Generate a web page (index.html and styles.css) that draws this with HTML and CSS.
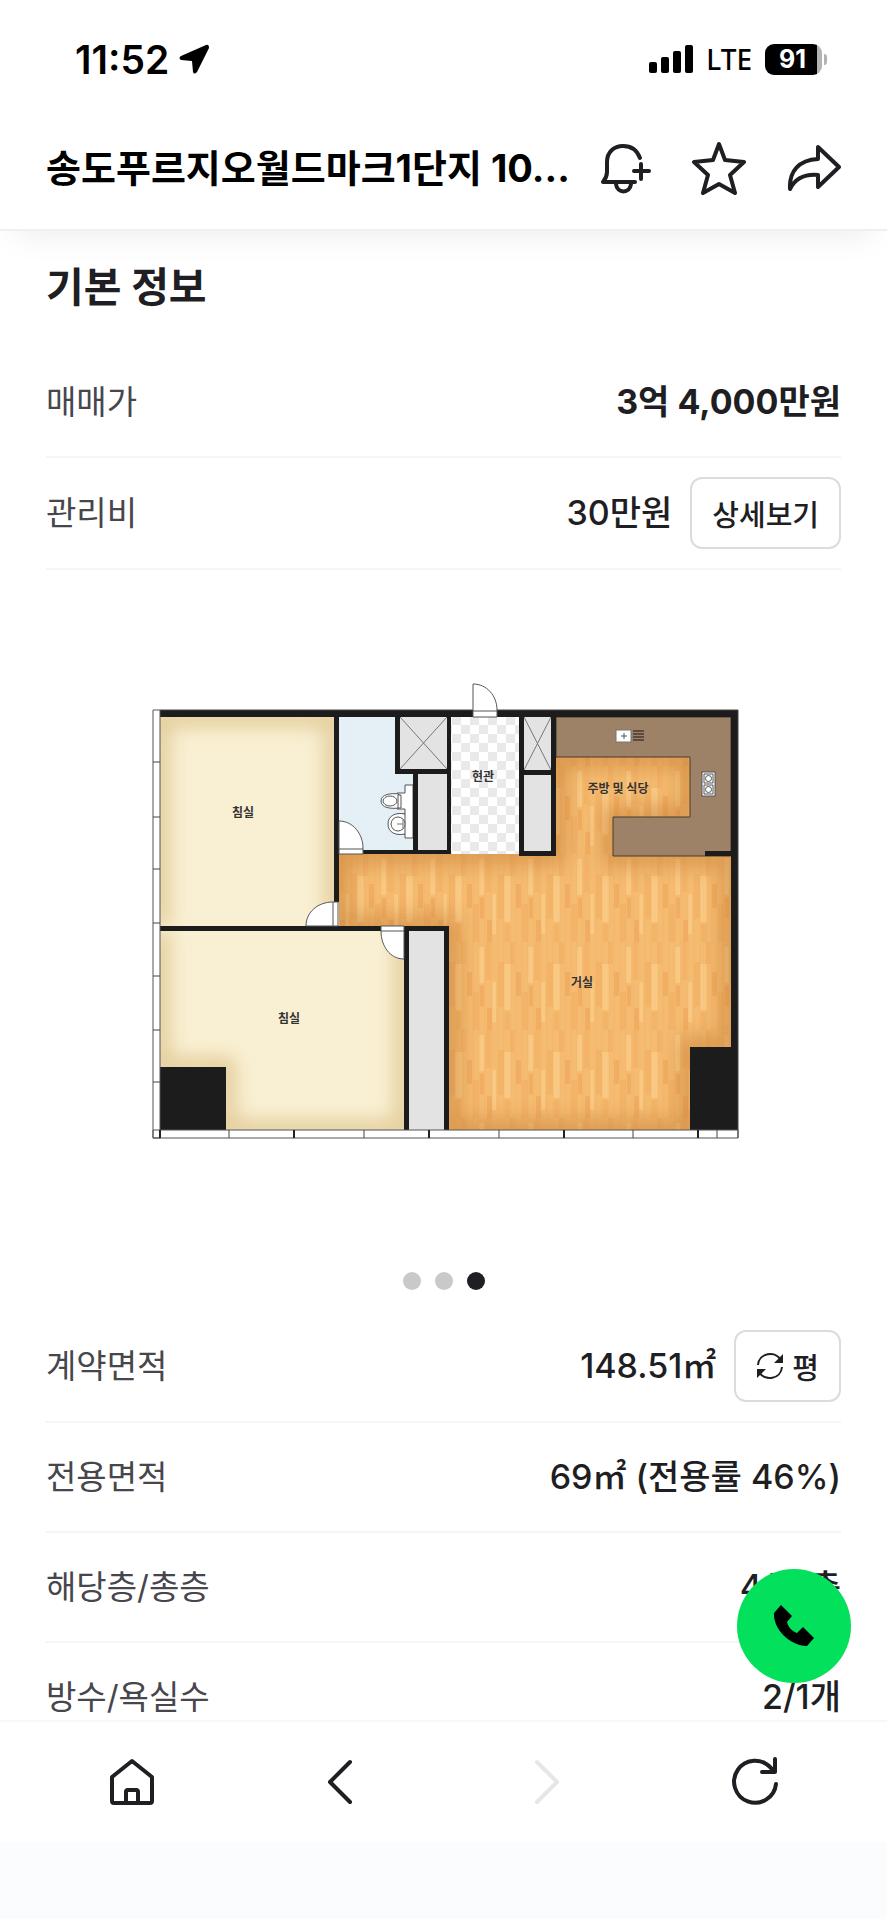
FILE: index.html
```html
<!DOCTYPE html>
<html lang="ko">
<head>
  <meta charset="UTF-8" />
  <meta name="viewport" content="width=device-width, initial-scale=1.0"/>
  <title>송도푸르지오월드마크1단지</title>
  <link rel="stylesheet" href="styles.css">
</head>
<body>

  <div class="app">
    <header class="header">
      <!-- Status bar -->
      <div class="status-bar">
        <div class="status-left">
          <span class="time">11:52</span>
          <svg class="location" viewBox="0 0 30 30" aria-hidden="true"><path d="M27 1 2 12q-3 2 0 4l11 1 1 11q1 3 4 0L30 4q0-4-3-3z"/></svg>
        </div>
        <div class="status-right">
          <svg class="signal" viewBox="0 0 44 28" aria-hidden="true">
            <rect x="0" y="17" width="8" height="11" rx="2"/>
            <rect x="12" y="12" width="8" height="16" rx="2"/>
            <rect x="24" y="6" width="8" height="22" rx="2"/>
            <rect x="36" y="0" width="8" height="28" rx="2"/>
          </svg>
          <span class="network">LTE</span>
          <div class="battery"><span class="battery-level">91</span></div>
        </div>
      </div>

      <!-- Toolbar -->
      <div class="toolbar">
        <h1 class="title">송도푸르지오월드마크1단지 10...</h1>
        <div class="actions">
          <button class="icon-btn" aria-label="알림 추가">
            <svg viewBox="0 0 54 54"><path d="M38 41H6q4-5 4-10V21C10 11 17 5 26 5c8 0 14 4 17 12M19 43c1 10 14 10 15 0M44 23v15M37 30h15"/></svg>
          </button>
          <button class="icon-btn" aria-label="관심 매물">
            <svg viewBox="0 0 54 54"><path d="M27 3l6 16 19 2-14 13 5 18-16-9-16 9 5-18L2 21l19-2z"/></svg>
          </button>
          <button class="icon-btn" aria-label="공유">
            <svg viewBox="0 0 54 54"><path d="M31 6l21 20-21 20V34C19 33 9 36 3 48 2 30 12 19 31 18z"/></svg>
          </button>
        </div>
      </div>
    </header>

    <div class="body">
      <main class="content">
        <h2 class="section-title">기본 정보</h2>

        <dl class="info">
          <div class="row">
            <dt>매매가</dt>
            <dd><strong>3억 4,000만원</strong></dd>
          </div>
          <div class="row">
            <dt>관리비</dt>
            <dd>30만원 <button class="btn">상세보기</button></dd>
          </div>
        </dl>

        <!-- Floor plan -->
        <div class="carousel">
          <svg class="plan" viewBox="46 600 795 640" role="img" aria-label="평면도">
            <defs>
              <pattern id="wood" x="339" y="854" width="49" height="88" patternUnits="userSpaceOnUse">
                <rect width="49" height="88" fill="#f5bb70"/>
                <path fill="#f3b468" d="M0 0h5v38H0zM12 20h6v45h-6zM24 0h5v22h-5zM36 50h6v38h-6zM19 70h5v18h-5z"/>
                <path fill="#f9c883" d="M18 22h7v46h-7zM6 40h4v40H6zM42 5h5v36h-5z"/>
                <path fill="#f1ad61" d="M30 30h5v24h-5zM1 66h5v22H1zM43 44h4v20h-4z"/>
                <path stroke="#e9a75c" stroke-opacity=".25" fill="none" d="M6 0v88M12 0v88M18 0v88M25 0v88M30 0v88M36 0v88M42 0v88M48 0v88"/>
              </pattern>
              <pattern id="tile" x="452" y="716" width="18" height="18" patternUnits="userSpaceOnUse">
                <rect width="18" height="18" fill="#fff"/>
                <path fill="#e9e9e9" d="M0 0h9v9H0zM9 9h9v9H9z"/>
              </pattern>
              <filter id="soft" x="-20%" y="-20%" width="140%" height="140%"><feGaussianBlur stdDeviation="10"/></filter>
              <clipPath id="bed1"><path d="M160 717h174v210H160z"/></clipPath>
              <clipPath id="bed2"><path d="M160 931h244v199H160z"/></clipPath>
              <clipPath id="living"><path d="M339 854h217v-97h175v373H449V927H339z"/></clipPath>
            </defs>

            <!-- Rooms -->
            <path fill="#f9f0d3" d="M160 717h174v210H160zM160 931h244v199H160z"/>
            <g clip-path="url(#bed1)"><path class="shade-cream" d="M160 927V717h174v210"/></g>
            <g clip-path="url(#bed2)"><path class="shade-cream" d="M160 931v136h66v63h178V931"/></g>
            <path fill="url(#wood)" d="M339 854h217v-97h175v373H449V927H339z"/>
            <g clip-path="url(#living)"><path class="shade-wood" d="M339 854h217v-97h134v60h-77v39h118v191h-41v83H449V927H339z"/></g>
            <path fill="#e5f0f6" d="M339 717h56v57h18v76h-74z"/>
            <path fill="url(#tile)" d="M451 717h68v137h-68z"/>
            <path fill="#e3e3e3" d="M400 717h47v52h-47zM418 774h29v76h-29zM524 717h27v53h-27zM524 775h27v76h-27zM409 931h35v199h-35z"/>
            <path class="thin" d="M400 717l47 52M447 717l-47 52M524 717l27 53M551 717l-27 53"/>

            <!-- Kitchen counter -->
            <path fill="#9d8268" stroke="#4a3b2c" d="M556 717h175v139H613v-39h77v-60H556z"/>
            <path fill="#fff" stroke="#777" d="M616 730h15v12h-15z"/>
            <path stroke="#555" d="M624 733v6M621 736h6"/>
            <path stroke="#5c4c40" stroke-width="2" d="M633 731h11M633 734h11M633 737h11M633 740h11"/>
            <rect class="fixture" x="702" y="772" width="13" height="24"/>
            <path class="fixture" d="M704 774h9v9h-9zM704 785h9v9h-9z"/>
            <circle class="fixture" cx="708.5" cy="778.5" r="3"/>
            <circle class="fixture" cx="708.5" cy="789.5" r="3"/>

            <!-- Bathroom fixtures -->
            <path class="fixture" d="M413 785h-8v8h-8v16h8v5h-8v20h8v4h8z"/>
            <path class="fixture" d="M399 794c-8-1-18 0-18 7s10 8 18 7z"/>
            <ellipse class="fixture" cx="390" cy="801" rx="7" ry="5"/>
            <path class="fixture" d="M398 795h3v13h-3z"/>
            <path class="fixture" d="M405 814c-10-2-17 2-17 10s7 12 17 10z"/>
            <circle class="fixture" cx="398" cy="824" r="7"/>
            <path class="thin" d="M397 824h6M403 820v8"/>

            <!-- Walls -->
            <path fill="#1c1c1c" d="M160 710h578v420h-48v-83h41V717H160z
              M334 717h5v185h-5z M395 717h5v52h47v-52h4v137h-88v-4h50v-76h-18z M418 774v76h29v-76z
              M519 717h5v53h27v-53h5v139h-37z M524 775v76h27v-76z M705 851h26v5h-26z
              M160 926h221v5H160z M404 926h45v204h-5V931h-35v199h-5z M160 1067h66v63h-66z" fill-rule="evenodd"/>

            <!-- Windows -->
            <path class="window" d="M153 710h7v428h-7zM153 1130h585v8H153z"/>
            <path class="tick" d="M153 762h7M153 817h7M153 869h7M153 923h7M153 976h7M153 1030h7M153 1082h7M229 1130v8M364 1130v8M499 1130v8M633 1130v8M717 1130v8"/>
            <path class="tick tick-bold" d="M160 1130v8M294 1130v8M429 1130v8M564 1130v8M698 1130v8"/>
            <path class="tick" d="M160 710h578v428"/>

            <!-- Doors -->
            <path class="door" d="M473 717v-33c14 0 24 12 24 26v7zM473 711h24"/>
            <path class="door" d="M339 854v-33c14 0 24 13 24 27v6zM339 849h24"/>
            <path class="door" d="M338 926h-32c0-14 12-24 27-24h5zM333 902v24"/>
            <path class="door" d="M404 926v33c-14 0-23-13-23-28v-5zM381 931h23"/>

            <g class="room-name">
              <text x="243" y="817">침실</text>
              <text x="289" y="1023">침실</text>
              <text x="483" y="781">현관</text>
              <text x="618" y="793">주방 및 식당</text>
              <text x="582" y="987">거실</text>
            </g>
          </svg>

          <div class="dots">
            <button class="dot" aria-label="1번째 사진"></button>
            <button class="dot" aria-label="2번째 사진"></button>
            <button class="dot active" aria-label="3번째 사진"></button>
          </div>
        </div>

        <dl class="info">
          <div class="row">
            <dt>계약면적</dt>
            <dd>148.51㎡
              <button class="btn">
                <svg class="swap" viewBox="0 0 28 28" aria-hidden="true">
                  <path class="swap-line" d="M2 13C3 1 19-2 25 8M26 15C25 27 9 30 3 20"/>
                  <path d="M27 2v9h-9zM1 26v-9h9z"/>
                </svg>평</button>
            </dd>
          </div>
          <div class="row">
            <dt>전용면적</dt>
            <dd>69㎡ (전용률 46%)</dd>
          </div>
          <div class="row">
            <dt>해당층/총층</dt>
            <dd>4/15층</dd>
          </div>
          <div class="row">
            <dt>방수/욕실수</dt>
            <dd>2/1개</dd>
          </div>
        </dl>
      </main>

      <button class="call-btn" aria-label="전화하기">
        <svg viewBox="0 0 42 42"><path d="M1 8 8 0l11 11-5 6c1 5 5 9 10 11l6-6 11 11-7 8C17 41 0 24 1 8z"/></svg>
      </button>
    </div>

    <!-- Bottom navigation -->
    <nav class="bottom-nav">
      <button class="nav-btn" aria-label="홈">
        <svg viewBox="0 0 54 54"><path d="M27 6 7 22v24q0 2 2 2h36q2 0 2-2V22zM21 48V37q0-2 2-2h8q2 0 2 2v11"/></svg>
      </button>
      <button class="nav-btn" aria-label="뒤로">
        <svg viewBox="0 0 54 54"><path d="M37 7 17 27l20 20"/></svg>
      </button>
      <button class="nav-btn" aria-label="앞으로" disabled>
        <svg viewBox="0 0 54 54"><path d="M17 7l20 20-20 20"/></svg>
      </button>
      <button class="nav-btn" aria-label="새로고침">
        <svg viewBox="0 0 54 54"><path d="M48 29A21 21 0 1 1 43 13l3 4M47 4v13H34"/></svg>
      </button>
    </nav>
  </div>

</body>
</html>
```

FILE: styles.css
```css
* {
  box-sizing: border-box;
  margin: 0;
  padding: 0;
}

body {
  background: #fbfcfe;
  color: #1e1e23;
  font-family: Inter, 'Noto Sans CJK KR', sans-serif;
  font-size: 33px;
}

button {
  background: none;
  border: none;
  color: inherit;
  font-family: inherit;
  cursor: pointer;
}

svg {
  display: block;
}

.app {
  display: flex;
  flex-direction: column;
  height: 100vh;
  background: #fff;
}

/* Header */
.header {
  position: relative;
  z-index: 2;
  background: #fff;
  border-bottom: 2px solid #f0f0f0;
  box-shadow: 0 20px 30px -16px rgba(0, 0, 0, 0.08);
}

.status-bar {
  display: flex;
  justify-content: space-between;
  align-items: center;
  height: 106px;
  padding: 12px 65px 0 75px;
  color: #000;
}

.status-left,
.status-right {
  display: flex;
  align-items: center;
  gap: 13px;
}

.status-left {
  gap: 10px;
}

.time {
  font-size: 39px;
  font-weight: 600;
}

.location {
  width: 30px;
  height: 30px;
}

.signal {
  width: 44px;
  height: 28px;
}

.network {
  font-family: 'Noto Sans', sans-serif;
  font-size: 28px;
  font-weight: 500;
}

.battery {
  position: relative;
  width: 57px;
  height: 31px;
  border-radius: 9px;
  background: linear-gradient(90deg, #000 52px, #b3b3b3 52px);
}

.battery::after {
  content: "";
  position: absolute;
  left: 59px;
  top: 10px;
  width: 3px;
  height: 11px;
  border-radius: 0 3px 3px 0;
  background: #b3b3b3;
}

.battery-level {
  display: block;
  padding-right: 2px;
  color: #fff;
  font-size: 25px;
  font-weight: 700;
  line-height: 31px;
  text-align: center;
}

.toolbar {
  display: flex;
  justify-content: space-between;
  align-items: center;
  height: 123px;
  padding: 0 46px;
}

.title {
  color: #000;
  font-size: 38px;
  font-weight: 700;
  line-height: 54px;
  white-space: nowrap;
}

.actions {
  display: flex;
  gap: 41px;
}

.icon-btn svg,
.nav-btn svg {
  width: 54px;
  height: 54px;
  fill: none;
  stroke: #1e1e23;
  stroke-width: 4;
  stroke-linecap: round;
  stroke-linejoin: round;
}

/* Content */
.body {
  position: relative;
  flex: 1;
  min-height: 0;
}

.content {
  height: 100%;
  padding: 0 46px;
  overflow-y: auto;
  scrollbar-width: none;
}

.section-title {
  padding: 26px 0 31px;
  font-size: 41px;
  font-weight: 700;
  line-height: 60px;
}

.row {
  display: flex;
  justify-content: space-between;
  align-items: center;
  padding: 19px 0;
  border-bottom: 2px solid #f5f5f6;
  line-height: 70px;
}

.row dt {
  color: #46464c;
}

.row dd {
  display: flex;
  align-items: center;
  gap: 18px;
  font-size: 34px;
  font-weight: 500;
}

.btn {
  display: flex;
  align-items: center;
  gap: 8px;
  height: 72px;
  padding: 0 20px;
  border: 2px solid #dcdcde;
  border-radius: 12px;
  font-size: 29px;
  font-weight: 500;
}

.swap {
  width: 28px;
  height: 28px;
  fill: #1e1e23;
}

.swap-line {
  fill: none;
  stroke: #1e1e23;
  stroke-width: 2;
}

/* Floor plan carousel */
.carousel {
  padding: 30px 0 21px;
}

.plan {
  width: 100%;
}

.shade-cream,
.shade-wood {
  fill: none;
  stroke: #dcbf85;
  stroke-width: 18;
  opacity: 0.8;
  filter: url(#soft);
}

.shade-wood {
  stroke: #c17a30;
  opacity: 0.6;
}

.thin {
  fill: none;
  stroke: #777;
}

.fixture {
  fill: #fff;
  stroke: #555;
}

.window,
.door {
  fill: #fff;
  stroke: #555;
}

.tick {
  fill: none;
  stroke: #444;
}

.tick-bold {
  stroke: #222;
  stroke-width: 2;
}

.room-name {
  fill: #333;
  font-size: 12px;
  font-weight: 700;
  text-anchor: middle;
}

.dots {
  display: flex;
  justify-content: center;
  gap: 14px;
  margin-top: 32px;
}

.dot {
  width: 18px;
  height: 18px;
  border-radius: 50%;
  background: #c8c9cb;
}

.dot.active {
  background: #1e1e23;
}

/* Call button floats over the list */
.call-btn {
  position: absolute;
  right: 36px;
  bottom: 37px;
  display: flex;
  justify-content: center;
  align-items: center;
  width: 114px;
  height: 114px;
  border-radius: 50%;
  background: #03e05b;
}

.call-btn svg {
  width: 42px;
  height: 42px;
}

/* Bottom navigation */
.bottom-nav {
  display: flex;
  padding: 0 28px;
  border-top: 2px solid #f7f7f8;
  border-bottom: 77px solid #fbfcfe;
}

.nav-btn {
  display: flex;
  flex: 1;
  justify-content: center;
  align-items: center;
  height: 120px;
}

.nav-btn:disabled svg {
  stroke: #e6e6e7;
}
```
